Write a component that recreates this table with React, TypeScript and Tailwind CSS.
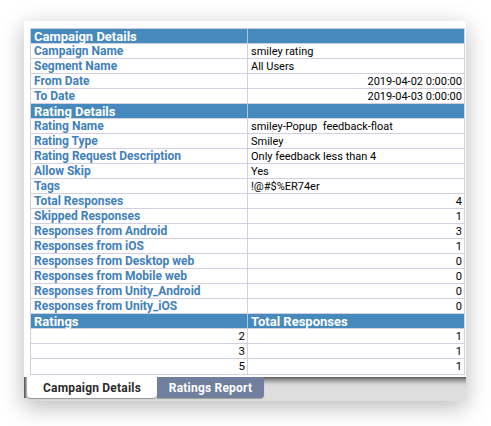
import React from 'react';

type Row =
  | { kind: 'head'; left: string; right?: string }
  | { kind: 'row'; left: string; right: string; align?: 'left' | 'right'; plainLeft?: boolean };

const rows: Row[] = [
  { kind: 'head', left: 'Campaign Details' },
  { kind: 'row', left: 'Campaign Name', right: 'smiley rating' },
  { kind: 'row', left: 'Segment Name', right: 'All Users' },
  { kind: 'row', left: 'From Date', right: '2019-04-02 0:00:00', align: 'right' },
  { kind: 'row', left: 'To Date', right: '2019-04-03 0:00:00', align: 'right' },
  { kind: 'head', left: 'Rating Details' },
  { kind: 'row', left: 'Rating Name', right: 'smiley-Popup\u00a0 feedback-float' },
  { kind: 'row', left: 'Rating Type', right: 'Smiley' },
  { kind: 'row', left: 'Rating Request Description', right: 'Only feedback less than 4' },
  { kind: 'row', left: 'Allow Skip', right: 'Yes' },
  { kind: 'row', left: 'Tags', right: '!@#$%ER74er' },
  { kind: 'row', left: 'Total Responses', right: '4', align: 'right' },
  { kind: 'row', left: 'Skipped Responses', right: '1', align: 'right' },
  { kind: 'row', left: 'Responses from Android', right: '3', align: 'right' },
  { kind: 'row', left: 'Responses from iOS', right: '1', align: 'right' },
  { kind: 'row', left: 'Responses from Desktop web', right: '0', align: 'right' },
  { kind: 'row', left: 'Responses from Mobile web', right: '0', align: 'right' },
  { kind: 'row', left: 'Responses from Unity_Android', right: '0', align: 'right' },
  { kind: 'row', left: 'Responses from Unity_iOS', right: '0', align: 'right' },
  { kind: 'head', left: 'Ratings', right: 'Total Responses' },
  { kind: 'row', left: '2', right: '1', align: 'right', plainLeft: true },
  { kind: 'row', left: '3', right: '1', align: 'right', plainLeft: true },
  { kind: 'row', left: '5', right: '1', align: 'right', plainLeft: true },
];

function SheetRow({ row, last }: { row: Row; last: boolean }) {
  const rowBorder = last ? '' : 'border-b border-[#d2cfe1]';

  if (row.kind === 'head') {
    return (
      <div className={`flex h-[15px] bg-[#4689bd] ${rowBorder}`}>
        <div className="w-[217px] border-r border-[#a9c6de] pl-[3px] text-[13px] font-bold leading-[15px] text-white">
          {row.left}
        </div>
        <div className="flex-1 pl-[3px] text-[13px] font-bold leading-[15px] text-white">{row.right}</div>
      </div>
    );
  }

  return (
    <div className={`flex h-[15px] bg-white ${rowBorder}`}>
      <div
        className={
          row.plainLeft
            ? 'w-[217px] border-r border-[#d2cfe1] pr-[2px] text-right text-[11.5px] leading-[15px] text-black'
            : 'w-[217px] border-r border-[#d2cfe1] pl-[3px] text-[12px] font-bold leading-[15px] text-[#3f80bd]'
        }
      >
        {row.left}
      </div>
      <div
        className={`flex-1 text-[11px] leading-[15px] text-black ${
          row.align === 'right' ? 'pr-[2px] text-right text-[11.5px]' : 'pl-[3px]'
        }`}
      >
        {row.right}
      </div>
    </div>
  );
}

export default function App() {
  return (
    <div className="min-h-screen bg-white pl-[24px] pt-[21px]" style={{ fontFamily: 'Roboto, "Liberation Sans", Arial, sans-serif' }}>
      <div className="w-[442px] bg-white shadow-[0_6px_22px_rgba(0,0,0,0.28)]">
        {/* Sheet */}
        <div className="pb-[2px] pl-[6px] pr-[2px] pt-[7px]">
          <div className="w-[435px] border-x border-t border-b border-[#d2cfe1]">
            {rows.map((row, i) => (
              <SheetRow key={i} row={row} last={i === rows.length - 1} />
            ))}
          </div>
        </div>

        {/* Sheet tabs */}
        <div className="relative flex h-[24px] bg-[linear-gradient(to_bottom,#5a5a5a_0px,#9a9a9a_3px,#d4d4d4_7px,#dedede_10px)] pl-[3px]">
          <div className="absolute bottom-[3px] left-0 top-0 w-[3px] bg-[linear-gradient(to_right,#4a4a4a,#bdbdbd)]" />
          <div className="flex h-[21px] w-[130px] items-center justify-center rounded-b-[4px] bg-white pt-[1px] text-[12px] font-bold tracking-[0.2px] text-[#2a2a2a] shadow-[0_1px_1px_rgba(0,0,0,0.35)]">
            Campaign Details
          </div>
          <div className="flex h-[21px] w-[107px] items-center justify-center rounded-br-[4px] bg-[#6f7f9d] pt-[1px] text-[12px] font-bold tracking-[0.2px] text-white shadow-[0_1px_1px_rgba(0,0,0,0.3)]">
            Ratings Report
          </div>
        </div>
      </div>
    </div>
  );
}
